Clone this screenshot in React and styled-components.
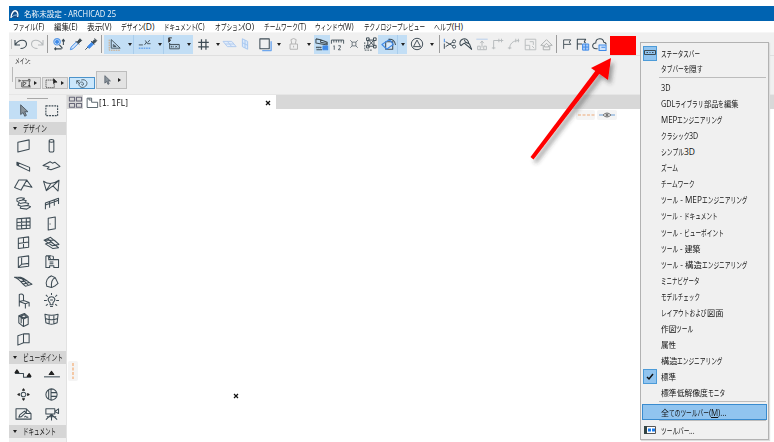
import React, { useLayoutEffect, useRef } from "react";
import styled, { createGlobalStyle, css } from "styled-components";

const Global = createGlobalStyle`
  * { box-sizing: border-box; }
  body { margin: 0; background: #fff; overflow: hidden; }
`;

const Window = styled.div`
  position: relative;
  width: 774px;
  height: 442px;
  padding: 6px 0 0 9px;
  display: flex;
  flex-direction: column;
  overflow: hidden;
  background: #fff;
  color: #141414;
  font: 8.5px/12px "Open Sans", "Noto Sans CJK JP", sans-serif;
`;
const TitleBar = styled.header`
  height: 15px;
  flex: none;
  display: flex;
  align-items: center;
  gap: 5px;
  padding-left: 1px;
  background: #0063b1;
  color: #f4f8fc;
  font-size: 8.5px;
`;
const MenuBar = styled.nav`
  height: 11px;
  flex: none;
  display: flex;
  align-items: center;
  padding-left: 4px;
  gap: 9.5px;
  font-size: 8.5px;
`;
const ToolStrip = styled.div`
  height: 24px;
  flex: none;
  display: flex;
  align-items: center;
  background: #f0f0f0;
  border-top: 1px solid #f6f6f6;
  border-bottom: 1px solid #dfdfdf;
`;
const Cell = styled.span`
  width: ${(p) => p.$w}px;
  height: 19px;
  flex: none;
  display: flex;
  align-items: center;
  justify-content: center;
  background: ${(p) => (p.$on ? "#c2def5" : "transparent")};
  ${(p) => p.$edge && css`box-shadow: inset -1px 0 #a9cdec;`}
`;
const Divider = styled.i`
  width: 1px;
  height: ${(p) => p.$h}px;
  background: ${(p) => (p.$h > 15 ? "#9c9c9c" : "#c4c4c4")};
`;
const Caret = styled.i`
  border: 2.5px solid transparent;
  border-top: 3px solid #222;
  border-bottom: 0;
`;
const RedBlock = styled.span`
  width: 26px;
  height: 19px;
  margin: 2px 0 0 3px;
  background: #f00;
`;
const MainStrip = styled.section`
  height: 39px;
  flex: none;
  display: flex;
  flex-direction: column;
  background: #f0f0f0;
  border-bottom: 1px solid #e6e6e6;
`;
const StripLabel = styled.div`
  height: 11px;
  padding-left: 6px;
  font-size: 7.5px;
  line-height: 11px;
`;
const StripRow = styled.div`
  display: flex;
  align-items: flex-end;
  height: 22px;
  padding-left: 3px;
  gap: 1px;
`;
const Handle = styled.i`
  width: 1px;
  height: 15px;
  margin: 0 1px 7px 0;
  background: #b9b9b9;
`;
const StripButton = styled.button`
  width: ${(p) => p.$w}px;
  height: ${(p) => p.$h}px;
  padding: 0;
  display: flex;
  align-items: center;
  justify-content: space-evenly;
  border: 1px solid ${(p) => (p.$active ? "#4b93cb" : "#bdbdbd")};
  background: ${(p) => (p.$active ? "#cbe7fc" : "#e3e3e3")};
`;
const SideCaret = styled.i`
  border: 2px solid transparent;
  border-left: 3px solid #222;
  border-right: 0;
`;
const Body = styled.div`
  flex: 1;
  min-height: 0;
  display: flex;
`;
const Palette = styled.aside`
  width: 58px;
  flex: none;
  background: #f0f0f0;
  border-right: 1px solid #e2e2e2;
`;
const Grip = styled.i`
  display: block;
  width: 21px;
  height: 1px;
  margin: 3px 0 2px 18px;
  background: #a8a8a8;
`;
const ToolGrid = styled.div`
  display: grid;
  grid-template-columns: 28px 29px;
  grid-auto-rows: ${(p) => p.$row}px;
`;
const ToolSlot = styled.span`
  display: flex;
  align-items: center;
  justify-content: center;
  background: ${(p) => (p.$on ? "#c2def5" : "transparent")};
`;
const GroupTitle = styled.div`
  height: 13px;
  margin: ${(p) => p.$m};
  display: flex;
  align-items: center;
  gap: 6px;
  padding-left: 4px;
  background: #d6d6d6;
  font-size: 9px;
`;
const Workspace = styled.main`
  flex: 1;
`;
const TabBar = styled.div`
  height: 14px;
  display: flex;
  background: #d8d8d8;
`;
const TabOverview = styled.span`
  width: 16px;
  display: flex;
  align-items: center;
  justify-content: center;
`;
const Tab = styled.div`
  width: 193px;
  display: flex;
  align-items: center;
  padding: 1px 5px 0 3px;
  gap: 1px;
  background: #fff;
  font-family: "DejaVu Sans", sans-serif;
  font-size: 8.5px;
`;
const Spacer = styled.span`
  flex: 1;
`;
const Chip = styled.span`
  position: absolute;
  left: ${(p) => p.$x}px;
  top: ${(p) => p.$y}px;
  width: ${(p) => p.$w}px;
  height: ${(p) => p.$h}px;
  display: flex;
  align-items: center;
  justify-content: center;
  border-radius: 2px;
  background: ${(p) => (p.$plain ? "transparent" : "#f4f4f4")};
`;
const ArrowOverlay = styled.svg`
  position: absolute;
  left: 520px;
  top: 50px;
`;
const Popup = styled.ul`
  position: absolute;
  left: 640px;
  top: 42px;
  width: 129px;
  height: 398px;
  margin: 0;
  padding: 2px 1px;
  list-style: none;
  border: 1px solid #b2b2b2;
  background: #f0f0f0;
  box-shadow: 1px 1px 1px #ddd;
`;
const Item = styled.li`
  height: ${(p) => p.$h || 16.05}px;
  display: flex;
  align-items: center;
  padding-left: ${(p) => (p.$hot ? 0 : 1)}px;
  ${(p) => p.$hot && css`background: #91c4ef; border: 1px solid #398bcf;`}
`;
const Mark = styled.span`
  width: 14px;
  height: 15px;
  margin-right: 4px;
  flex: none;
  display: flex;
  align-items: center;
  justify-content: center;
  ${(p) => p.$on && css`background: #91c4ef; border: 1px solid #4c9bd8;`}
`;
const Rule = styled.li`
  height: 1px;
  margin: ${(p) => p.$m} 1px ${(p) => p.$mb} 17px;
  background: #bcbcbc;
`;
const Measure = styled.span`
  flex: none;
  display: inline-flex;
  white-space: pre;
  padding-top: ${(p) => (p.$flush ? 0 : 1)}px;
`;
const Run = styled.span`
  flex: none;
  display: block;
`;
const Glyphs = styled.span`
  display: inline-block;
  transform-origin: 0 50%;
`;

/* UI label of a fixed width: kana are condensed, kanji and Latin stay near their natural width. */
function Label({ w, flush, children }) {
  const root = useRef(null);
  const text = [].concat(children);
  const runs = text.flatMap((part) =>
    typeof part === "string" ? part.match(/[ぁ-ゖァ-ヺー]+|[^ぁ-ゖァ-ヺー]+/g) : [part]
  );
  useLayoutEffect(() => {
    const boxes = [...root.current.children];
    const glyphs = boxes.map((b) => b.firstChild);
    const sizes = glyphs.map((g) => {
      g.style.transform = "none";
      return g.getBoundingClientRect().width;
    });
    const isKana = glyphs.map((g) => /^[ぁ-ゖァ-ヺー]/.test(g.textContent));
    const sum = (flag) => sizes.reduce((s, v, i) => (isKana[i] === flag ? s + v : s), 0);
    const kana = sum(true);
    const rest = sum(false);
    const other = kana ? Math.max(0.82, Math.min(1, (w - kana * 0.67) / (rest || 1))) : w / rest;
    const narrow = kana ? (w - rest * other) / kana : 1;
    boxes.forEach((b, i) => {
      const k = isKana[i] ? narrow : other;
      b.style.width = `${sizes[i] * k}px`;
      glyphs[i].style.transform = `scaleX(${k})`;
    });
  }, [w, children]);
  return (
    <Measure ref={root} $flush={flush} style={{ width: w }}>
      {runs.map((r, i) => <Run key={i}><Glyphs>{r}</Glyphs></Run>)}
    </Measure>
  );
}

const INK = "#3d4b54";
const BLUE = "#3f8ae8";
const FADE = "#b6babc";

/* Stroke drawings on a 16 x 16 field: each entry is [path, stroke, fill, width, dash]. */
const art = {
  undo: [["M2 4v5h5M2.5 8.5C6 3 13 3 13.5 8c0 3-3 4.5-6 4.5"]],
  redo: [["M14 4v5H9M13.5 8.5C10 3 3 3 2.5 8c0 3 3 4.5 6 4.5", FADE]],
  pick: [["M9.500 5.500a3.7 3.7 0 1 1-7.4 0a3.7 3.7 0 1 1 7.4 0", "#5b9ae6", "#cfe3fa", 1.3], ["M4 5.500a1.800 1.800 0 1 0 3.600 0a1.800 1.800 0 1 0-3.600 0", BLUE, BLUE], ["M8.5 9l3.5 4M3 13.5h8M4.500 12L3 13.500l1.500 1.500", INK, "none", 1.3], ["M13 9V3m-1.500 2L13 2.500L14.500 5", INK, "none", 1.200]],
  dropper: [["M1.500 14.500l1-3l6-6l2 2l-6 6z", BLUE, "#d8e8fb"], ["M7.500 4.500l4 4M9.500 5.500l3-3.500l2 2l-3.500 3z", INK, INK]],
  syringe: [["M1.500 14.500l3-3", INK], ["M4 11l5-5l2 2l-5 5z", BLUE, BLUE], ["M8 4.500l4 4M9.500 6l2.500-3l2 2l-3 2.500zM12 1.500l3 3", INK, INK]],
  guide: [["M4 2v10.500h11zM6.500 8v2.500h3.500z"], ["M1.500 2v13h14", "#d39a62", "none", 1, "2 1"]],
  snap: [["M1 8.500h5M8 8.500l2.500-3.500M9 3l2.500 4h4M12 5.500l2.500-3"], ["M1 12.500h14", BLUE, "none", 1.2, "2 1"]],
  tracker: [["M2 1v5l2-2zM2 1h3.500", "#333", "#333"], ["M3 7v1.500h11v5H3z"], ["M5 10v2M7 10v2M9.500 10l2 2m0-2l-2 2"]],
  hash: [["M5.500 1.500v13M11 1.500v13M1.500 5.500h13M1.500 11h13", INK, "none", 1.5]],
  plane: [["M0 5h10l5 6h-10zM5 5l5 6M2.500 8h10", "#b0caee", "#e2edfb"]],
  wall: [["M5 2l6 3v9l-6-3zM5 6.500l6 3M8 3.500v9", "#a5c7ef", "#dceafb"]],
  layer: [["M2 2h10v10.500H2z"], ["M14 4.500v10H4.500", "#6ea7ee", "none", 1.5]],
  lock: [["M5.500 8L4.500 3q3-2.500 6 0l-1 5M3.500 8h8.500v6H3.500zM7.500 10v2", "#b3b3b3"]],
  roof: [["M1 2l5 1v2.500l7 1.500M1 2v4.500l12 2M6 3l7 2.500v3M1 11h6M1.500 13.500h6", INK], ["M8.500 9.500h5v4h-5z", BLUE, BLUE], ["M1.500 11.500h6", INK, "none", 1, "1 1"]],
  ruler: [["M.5 7V2.500h15V7M3.500 2.500V5.500M6.500 2.500V5.500M9.500 2.500V5.500M12.500 2.500V5.500"], ["M4 14.500V9.500l-1 .5M9 9.500h2.500v2L9 14.500h3", INK, "none", 1]],
  target: [["M5 5h6v6H5zM2 2l3 3M14 2l-3 3M2 14l3-3M14 14l-3-3"]],
  box: [["M5.500 3.500h7v7h-7zM4 1h3v3H4zM12 1h3v3h-3zM4 9.500h3v3H4zM12 9.500h3v3h-3zM7 4l5 5.500m0-5.500l-5 5.500"], ["M2 6v9h9", INK, "none", 1, "2 1"]],
  trace: [["M5 5h7.500v8H5z", INK, "#d8eafb"], ["M1 8l8-5.500l4 5.500l-7 5z", BLUE, "none", 1.200], ["M8 2.500c4-1 7 2 7.500 6", INK]],
  tri: [["M1.500 8a6.500 6.500 0 1 0 13 0a6.500 6.500 0 1 0-13 0M8 3.500l4 7.500H4z"]],
  cut: [["M3 5.500l9 5M3 11l9-5.500M1.500 7.500v6"], ["M11 5a1.700 1.700 0 1 0 3.400 0a1.700 1.700 0 1 0-3.400 0M11 11a1.700 1.700 0 1 0 3.400 0a1.700 1.700 0 1 0-3.400 0", INK, "#fff"], ["M1.500 2v4", BLUE]],
  axe: [["M2 10a5 5 0 1 1 9-2.500M2 10l4-3l8.500 7", INK, "none", 1.200], ["M8 6l4 2l2.500 6.500M6 3l2 4", INK, "none", 1.200]],
  up: [["M1.500 2.500h13", "#b5cdec"], ["M8 12V5M6 7l2-2.500L10 7M3 10.500h3v4H3zM10 10.500h3v4h-3zM6 14.500h4", FADE]],
  corner: [["M3 14V4h11M9 2v4M12 2v4M1 12.500h4", FADE]],
  arc: [["M3 14C3 8 6 4 14 4M10 2v4M13 2v4M1 12.500h4", FADE]],
  resize: [["M1.500 1.500h13v13h-13zM1.500 9h5.500v5.500M7 4.500h4.500v4M10 10l2.500 2.500", FADE]],
  home: [["M1 9l7-7L15 9h-3v5.500H4V9zM5.500 9L8 6.500L10.500 9v2h-5z", "#a7abac"]],
  flag: [["M3.500 14.500V2.500h9.500l-2 3L13 8.500H4", INK, "none", 1.200]],
  flagGrid: [["M1.500 14.500V2.500H11L9.500 5.500L11 7M2 8h5", INK, "none", 1.200], ["M7.500 8h7v7h-7zM7.500 11.500h7M11 8v7", BLUE, "#a9cbf7"]],
  cloud: [["M6 12.500H4.500C-1 12.500 0 6 4 6.500c0-6 8-6 8.500-1c2 0 2.500 1.500 2.500 2.500"], ["M7.500 8.500h7.500v6H7.500zM10 11h4", BLUE, "#cfe2fb"]],
  arrow: [["M4.500 1v12l3-2.500L9.500 15l2-1l-2-4.500h4z", "#4a5560", "#8a949c"]],
  marquee: [["M2 3h12.500v10.500H2z", INK, "none", 1.2, "2 1"]],
  wallTool: [["M2 4.500l12-2.500v10l-12 3z"]],
  column: [["M5.500 3c0-2 5-2 5 0v10.500c0 2-5 2-5 0zM5.500 3c0 2 5 2 5 0"]],
  beam: [["M1 4.500l13.500 5.500v4L3 8.500zM1 4.500v3l2 1l-.5-3"]],
  slab: [["M-1 8L6.500 4L9 5.500L11.500 4.500L17 9L7.500 12.500L3.500 11.500L5.500 9.500z"]],
  roofTool: [["M3 3.300h8.500L5.300 14L-1.500 11.300zM11.500 3.300L17 11L8.500 9"]],
  shell: [["M-.5 4.500Q7 10 16 3.500L15 15L9.500 9.500L2.500 14.500zM9.500 9.500L16 3.500M2.500 14.500L7 7.500"]],
  stair: [["M1 3q4-2 8-.5l-2 1.500l4 1l-1.500 2l4 1l-1 2l3 1.500l-4 2.500l-7-1l1-2L2 9.500L3.500 7L1 5.500zM3 5l6-1M4 8l6-1M6 11l7-1"]],
  rail: [["M1.500 14V7.500l14-5v6M6 12.500V6M11 10.500V4M1.500 9.500l14-5"]],
  curtain: [["M1 3l14-1v11L1 14zM1 7l14-1M1 10.500l14-1M6 3v11M11 2.500v11"]],
  door: [["M4.500 2.500L12 1v12.500l-7.500 1.500zM6.500 8v1"]],
  window: [["M2.500 3.500l11-1.500v11l-11 1.500zM8 2.700v11M2.500 9l11-1.500"]],
  sky: [["M0 5.500l7-3l9 7.500l-7 1.500zM0 5.500h11l5 4.500M1.500 9.500l6-2l8 6l-6 1zM4 4l8 7"]],
  opening: [["M2.500 3.500l11-1.500v11l-11 1.500zM6 3v8l7.500-1M2.500 14l3.500-3"]],
  zone: [["M2 2h3v4h5V3l-1-1M5 2h3M10 6h5.500v8.500h-5l0-2H6v2H2V2M6 8.500h4M6 10.500h4M5 2l2 3"]],
  mesh: [["M-2 3.500h7c5 1 6 4 12 7.500l-7 2C6 10 3 4-2 3.500M2 4l9 2.500M5 8l7-1M7 11l7-2M5 3.500l8 8.500"]],
  morph: [["M8 14.500L3 13c-2-5 1-10 5-11l4 2l3 6l-3 2.500l-4 2zM8 14.500C7.500 9 9 5 12 4"]],
  chair: [["M3.500 9V1.500q3-1 4.500 1V8M3.500 9v5.500M3.500 9l4.500-1l6 2l-4 1.500zM10 11.500v5M14 10v4.500"]],
  lamp: [["M6.500 12.500V10.500C2.500 7 5 4 8 4s5.500 3 1.500 6.500v2zM6.500 14.500h3M8 0v2M2 2l2 2M14 2l-2 2M0 8h3M13 8h3M2 13.500l2-1.500M14 13.500l-2-1.500M6.500 7.500h3"]],
  object: [["M3 4l6-2.500l4 3.500v8l-5 2.500l-5-4zM3 4l5 3.500l5-2.500M8 7.500v8M5 4.500l4-1.500l2 2l-3 1zM5.500 6v6"]],
  curved: [["M1 2.500c5 1.500 9 1.500 14 0l-1 9c-4 2-8 2-12 0zM1.500 7c5 2 8 2 13 0M5.500 3.500v9.500M10.500 3.500v9.500"]],
  corners: [["M2 4l6-2v9.500l-6 2.500zM8 2h6v9.500l-6 0"]],
  section: [["M-1 7h9v4h8"], ["M-1 6l2-3l2 3zM12 10l2-3l2 3z", "#222", "#222"]],
  elevation: [["M0 10.500h17"], ["M5.500 8L8 4.500L10.500 8z", "#222", "#222"]],
  interior: [["M5.500 8a2.500 2.500 0 1 0 5 0a2.500 2.500 0 1 0-5 0"], ["M8 2l1 1.500H7zM8 14l1-1.500H7zM2 8l1.500-1v2zM14 8l-1.500-1v2z", "#222", "#222"]],
  detail: [["M2 8a6 6 0 1 0 12 0a6 6 0 1 0-12 0M7.500 2v12M7.500 6h6M7.500 10h6M5 3v10"]],
  worksheet: [["M0 3h11l5 5v6H0zM11 3v5h5M3 12l1-2.500l5-4l1.500 1.500l-5 4.500zM9 12q1-2 2-.5q1 1 2 0"]],
  camera: [["M2 3h9.500v5.500H2zM11.500 6l4-3v5zM8 8.500v7M8 9l-6 5.500M8 9l6 5.500M3 11.500h10"]],
  tabs: [["M1.500 2.500h5.500v4H1.500zM9 2.500h5.500v4H9zM1.500 9h5.500v4H1.500zM9 9h5.500v4H9z", "#667"]],
  folder: [["M1.500 1.500h6v5.500h8v7H1.500zM4 1.500v2.500h3"]],
  spiral: [["M1 5l4 4M1 9V5h4M7 4c6-2 10 4 6 8c-4 4-10 1-9-3c2-4 7-2 6 1c-1 2-3 1-2-1"]],
  selection: [["M0 4h3M0 2v4M4 4h11v9H4V6M13 2h3v3M13 11h3v3M6 5.500v6l4.500-4z", "#303030"]],
  marqueeSmall: [["M0 3h12v11H0z", "#444", "none", 1.2, "2 1"], ["M11 1v7l2-2h3z", "#222", "#222"]],
};
const Drawing = styled.svg`
  width: ${(p) => p.$s}px;
  height: ${(p) => p.$s}px;
  flex: none;
  overflow: visible;
`;
function Icon({ name, size = 16 }) {
  return (
    <Drawing $s={size} viewBox="0 0 16 16">
      {art[name].map(([d, stroke = INK, fill = "none", width = 1.1, dash], i) => (
        <path key={i} d={d} stroke={stroke} fill={fill} strokeWidth={width} strokeDasharray={dash} strokeLinejoin="round" />
      ))}
    </Drawing>
  );
}

const menus = [["ファイル(F)", 31], ["編集(E)", 23.5], ["表示(V)", 24.5], ["デザイン(D)", 34], ["ドキュメント(C)", 41], ["オプション(O)", 39.5], ["チームワーク(T)", 42], ["ウィンドウ(W)", 39], ["テクノロジープレビュー", 61], ["ヘルプ(H)", 29]];

/* [kind, width, highlighted, edge] */
const tools = [
  ["|s", 4], ["undo", 16], ["redo", 16], ["|", 4], ["pick", 19], ["dropper", 15], ["syringe", 16], ["|", 5],
  ["guide", 21, 1], ["v", 9, 1, 1], ["snap", 21, 1], ["v", 9, 1, 1], ["tracker", 20, 1], ["v", 9, 1],
  ["hash", 20], ["v", 9], ["plane", 16], ["wall", 14], ["", 5], ["layer", 16], ["v", 12], ["lock", 18], ["v", 11],
  ["roof", 16, 1], ["ruler", 15], ["target", 17], ["box", 16], ["trace", 20, 1, 1], ["v", 9, 1], ["tri", 20], ["v", 10],
  ["|", 4], ["", 1], ["cut", 16], ["axe", 16], ["up", 16], ["corner", 16], ["arc", 16], ["resize", 16], ["home", 16],
  ["|", 5], ["flag", 16], ["flagGrid", 16], ["cloud", 16],
];
const small = { target: 10, hash: 13, wall: 14, flag: 12, flagGrid: 14, home: 13, resize: 13, axe: 14, cut: 14, up: 14, corner: 14, arc: 14, lock: 14, tri: 14, ruler: 13, box: 14, guide: 13, snap: 13, tracker: 14, undo: 16, redo: 16, pick: 14, dropper: 14, syringe: 14, plane: 14 };

const designTools = ["wallTool", "column", "beam", "slab", "roofTool", "shell", "stair", "rail", "curtain", "door", "window", "sky", "opening", "zone", "mesh", "morph", "chair", "lamp", "object", "curved", "corners"];
const viewTools = ["section", "elevation", "interior", "detail", "worksheet", "camera"];

const toolbars = [["3D", 9.5], ["GDLライブラリ部品を編集", 77.5], ["MEPエンジニアリング", 62], ["クラシック3D", 37.5], ["シンプル3D", 34], ["ズーム", 17], ["チームワーク", 33.5], ["ツール - MEPエンジニアリング", 86.5], ["ツール - ドキュメント", 56.5], ["ツール - ビューポイント", 63], ["ツール - 建築", 39.5], ["ツール - 構造エンジニアリング", 86.5], ["ミニナビゲータ", 38.5], ["モデルチェック", 39], ["レイアウトおよび図面", 62], ["作図ツール", 32.5], ["属性", 15], ["構造エンジニアリング", 62], ["標準", 15, true], ["標準低解像度モニタ", 64]];

function Tool({ item: [kind, w, on, edge] }) {
  let content = null;
  if (kind === "v") content = <Caret />;
  else if (kind === "|s") content = <Divider $h={10} />;
  else if (kind === "|") content = <Divider $h={18} />;
  else if (kind) content = <Icon name={kind} size={small[kind] || 15} />;
  return <Cell $w={w} $on={on} $edge={edge}>{content}</Cell>;
}

function ToolbarMenu() {
  return (
    <Popup>
      <Item>
        <Mark $on>
          <svg width="12" height="8" viewBox="0 0 12 8" fill="none" stroke={INK}><path d="M.5 1.500h11v4H.5zM2.500 3.500h1.500M5.500 3.500h1M8 3.500h1.500" /></svg>
        </Mark>
        <Label w={39}>ステータスバー</Label>
      </Item>
      <Item><Mark /><Label w={42} flush>タブバーを隠す</Label></Item>
      <Rule $m="0px" $mb="2px" />
      {toolbars.map(([name, w, checked]) => (
        <Item key={name}>
          <Mark $on={checked}>
            {checked && <svg width="8" height="8" viewBox="0 0 8 8"><path d="M1 4l2 2l4-5" fill="none" stroke="#111" strokeWidth="1.5" /></svg>}
          </Mark>
          <Label w={w} flush>{name}</Label>
        </Item>
      ))}
      <Rule $m="0px" $mb="2px" />
      <Item $hot $h={16}><Mark /><Label w={66}>全てのツールバー(<u>M</u>)...</Label></Item>
      <Rule $m="0px" $mb="1px" />
      <Item>
        <Mark>
          <svg width="12" height="9" viewBox="0 0 12 9"><path d="M.5.5h11v7H.5z" fill="#fff" stroke="#555" /><path d="M0 0h3v8H0z" fill="#344" /><path d="M4 2.500h3v3H4zM8 2.500h3v3H8z" fill="#187bed" /></svg>
        </Mark>
        <Label w={34}>ツールバー...</Label>
      </Item>
    </Popup>
  );
}

export default function App() {
  return (
    <Window>
      <Global />
      <TitleBar>
        <svg width="9" height="10" viewBox="0 0 9 10"><path d="M0 1h9v8H0z" fill="#174d8a" /><path d="M1 9C1 4 4 1 6 2c2 1 2 4 1.500 6" fill="none" stroke="#fff" strokeWidth="1.400" /><path d="M2 8c2-2 3-2 6-2" fill="none" stroke="#9bc8ed" /></svg>
        <Label w={92} flush>名称未設定 - ARCHICAD 25</Label>
      </TitleBar>
      <MenuBar>{menus.map(([t, w]) => <Label key={t} w={w} flush>{t}</Label>)}</MenuBar>
      <ToolStrip>
        {tools.map((item, i) => <Tool key={i} item={item} />)}
        <RedBlock />
      </ToolStrip>
      <MainStrip>
        <StripLabel><Label w={16} flush>メイン:</Label></StripLabel>
        <StripRow>
          <Handle />
          <StripButton $w={26} $h={12}><Icon name="selection" size={11} /><SideCaret /></StripButton>
          <StripButton $w={26} $h={12}><Icon name="marqueeSmall" size={11} /><SideCaret /></StripButton>
          <StripButton $w={26} $h={12} $active><Icon name="spiral" size={12} /></StripButton>
          <StripButton $w={31} $h={18}><Icon name="arrow" size={10} /><SideCaret /></StripButton>
        </StripRow>
      </MainStrip>
      <Body>
        <Palette>
          <Grip />
          <ToolGrid $row={18}>
            <ToolSlot $on><Icon name="arrow" size={13} /></ToolSlot>
            <ToolSlot><Icon name="marquee" size={15} /></ToolSlot>
          </ToolGrid>
          <GroupTitle $m="3px 0 1px"><Caret /><Label w={24}>デザイン</Label></GroupTitle>
          <ToolGrid $row={19.36}>
            {designTools.map((n) => <ToolSlot key={n}><Icon name={n} size={15} /></ToolSlot>)}
          </ToolGrid>
          <GroupTitle $m="2px 0 1px"><Caret /><Label w={40}>ビューポイント</Label></GroupTitle>
          <ToolGrid $row={19.5}>
            {viewTools.map((n) => <ToolSlot key={n}><Icon name={n} size={15} /></ToolSlot>)}
          </ToolGrid>
          <GroupTitle $m="2px 0"><Caret /><Label w={33}>ドキュメント</Label></GroupTitle>
        </Palette>
        <Workspace>
          <TabBar>
            <TabOverview><Icon name="tabs" size={15} /></TabOverview>
            <Tab>
              <Icon name="folder" size={12} />
              <Label w={29}>[1. 1FL]</Label>
              <Spacer />
              <svg width="6" height="6" viewBox="0 0 6 6"><path d="M1 1l4 4M5 1L1 5" stroke="#111" strokeWidth="1.300" /></svg>
            </Tab>
          </TabBar>
        </Workspace>
      </Body>
      <Chip $x={576} $y={110} $w={19} $h={10}><svg width="18" height="2"><path d="M1 1h17" stroke="#edaa78" strokeDasharray="3 1.500" /></svg></Chip>
      <Chip $x={597} $y={110} $w={20} $h={10}>
        <svg width="16" height="8" viewBox="0 0 16 8" fill="none"><path d="M0 4h4M12 4h4" stroke="#6d9fd6" /><path d="M4 4q4-4 8 0q-4 4-8 0z" stroke="#777" /><circle cx="8" cy="4" r="1.500" fill="#777" /></svg>
      </Chip>
      <Chip $x={68} $y={361} $w={10} $h={20}><svg width="2" height="18"><path d="M1 1v16" stroke="#f4b98b" strokeWidth="1.500" strokeDasharray="3 1.500" /></svg></Chip>
      <Chip $plain $x={233} $y={393} $w={6} $h={6}><svg width="6" height="6" viewBox="0 0 6 6"><path d="M1 1l4 4M5 1L1 5" stroke="#111" strokeWidth="1.200" /></svg></Chip>
      <ArrowOverlay width="120" height="120">
        <defs><filter id="shade" x="-20%" y="-20%" width="150%" height="150%"><feDropShadow dx="3" dy="4" stdDeviation="2" floodColor="#333" floodOpacity=".45" /></filter></defs>
        <g filter="url(#shade)" fill="#f00"><path d="M10.500 107L76 20l4 3L13.500 109.500z" /><path d="M91 8L71 18L88 30z" /></g>
      </ArrowOverlay>
      <ToolbarMenu />
    </Window>
  );
}
